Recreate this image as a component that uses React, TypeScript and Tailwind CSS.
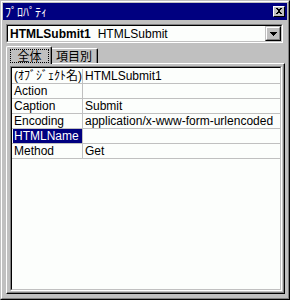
export default function App() {
  const rows: { name: string; value: string; selected?: boolean }[] = [
    { name: "(ｵﾌﾞｼﾞｪｸﾄ名)", value: "HTMLSubmit1" },
    { name: "Action", value: "" },
    { name: "Caption", value: "Submit" },
    { name: "Encoding", value: "application/x-www-form-urlencoded" },
    { name: "HTMLName", value: "", selected: true },
    { name: "Method", value: "Get" },
  ];
  return (
    <div className="w-[290px] h-[300px] border border-t-[#c0c0c0] border-l-[#c0c0c0] border-r-black border-b-black font-['Liberation_Sans','Noto_Sans_CJK_JP',sans-serif] text-[12px] leading-[14px] text-black">
      <div className="h-full flex flex-col p-px bg-[#c0c0c0] border border-t-white border-l-white border-r-[#808080] border-b-[#808080]">
        {/* title bar */}
        <div className="h-[17px] bg-[#000080] flex items-center justify-between pl-[2px] pr-[2px]">
          <span className="text-white font-['Noto_Sans_CJK_JP',sans-serif] text-[12px] leading-[14px]">ﾌﾟﾛﾊﾟﾃｨ</span>
          <div className="w-[12px] h-[11px] bg-[#c0c0c0] border border-t-white border-l-white border-r-black border-b-black flex items-center justify-center">
            <svg width="8" height="7" viewBox="0 0 8 7" shapeRendering="crispEdges">
              <path d="M1 0h2v1h-2zM5 0h2v1h-2zM2 1h2v1h-2zM4 1h2v1h-2zM3 2h2v2h-2zM2 4h2v1h-2zM4 4h2v1h-2zM1 5h2v1h-2zM5 5h2v1h-2z" fill="black" />
            </svg>
          </div>
        </div>
        {/* combobox */}
        <div className="mt-[4px] ml-[3px] mr-[4px] h-[19px] border border-t-[#808080] border-l-[#808080] border-r-white border-b-white">
          <div className="h-full border border-t-black border-l-black border-r-[#c0c0c0] border-b-[#c0c0c0] bg-[#fcfefc] flex items-center">
            <div className="flex-1 flex items-center pl-[2px] overflow-hidden whitespace-nowrap">
              <span className="font-bold">HTMLSubmit1</span>
              <span className="ml-[7px]">HTMLSubmit</span>
            </div>
            <div className="w-[16px] h-full bg-[#c0c0c0] border border-t-[#c0c0c0] border-l-[#c0c0c0] border-r-black border-b-black">
              <div className="h-full border border-t-white border-l-white border-r-[#808080] border-b-[#808080] flex items-center justify-center">
                <svg width="7" height="4" viewBox="0 0 7 4" shapeRendering="crispEdges">
                  <path d="M0 0h7v1h-7zM1 1h5v1h-5zM2 2h3v1h-3zM3 3h1v1h-1z" fill="black" />
                </svg>
              </div>
            </div>
          </div>
        </div>
        {/* tabs */}
        <div className="mt-[3px] ml-[3px] h-[17px] flex items-end relative z-10 font-['Noto_Sans_CJK_JP',sans-serif]">
          <div className="w-[46px] h-[18px] -mb-px bg-[#c0c0c0] border-t border-l border-white border-r border-r-black rounded-tl-[2px] rounded-tr-[2px]">
            <div className="h-full border-r border-r-[#808080] pt-[2px] pl-[3px] pr-[1px]">
              <div className="h-[14px] border border-dotted border-black flex items-center justify-center leading-[12px]">全体</div>
            </div>
          </div>
          <div className="w-[46px] h-[15px] bg-[#c0c0c0] border-t border-white border-r border-r-black rounded-tr-[2px]">
            <div className="h-full border-r border-r-[#808080] flex items-center justify-center leading-[12px]">項目別</div>
          </div>
        </div>
        {/* panel */}
        <div className="flex-1 ml-[3px] mr-[2px] mb-[3px] border border-t-white border-l-white border-r-black border-b-black">
          <div className="h-full border-r border-b border-r-[#808080] border-b-[#808080] pl-[3px] pr-[1px] pt-[2px] pb-[1px]">
            <div className="h-full border border-t-[#808080] border-l-[#808080] border-r-white border-b-white">
              <div className="h-full border border-t-black border-l-black border-r-[#c0c0c0] border-b-[#c0c0c0] bg-[#fcfefc] pt-px">
                {rows.map((r) => (
                  <div key={r.name} className="h-[15px] flex border-b border-b-[#c0c0c0] whitespace-nowrap">
                    <div className="w-[71px] border-r border-r-[#c0c0c0] pl-px overflow-hidden">
                      <div className={r.selected ? "h-full bg-[#000080] text-white pl-px" : "h-full pl-px"}>
                        {r.name}
                      </div>
                    </div>
                    <div className="flex-1 pl-[2px] overflow-hidden">{r.value}</div>
                  </div>
                ))}
              </div>
            </div>
          </div>
        </div>
      </div>
    </div>
  );
}
